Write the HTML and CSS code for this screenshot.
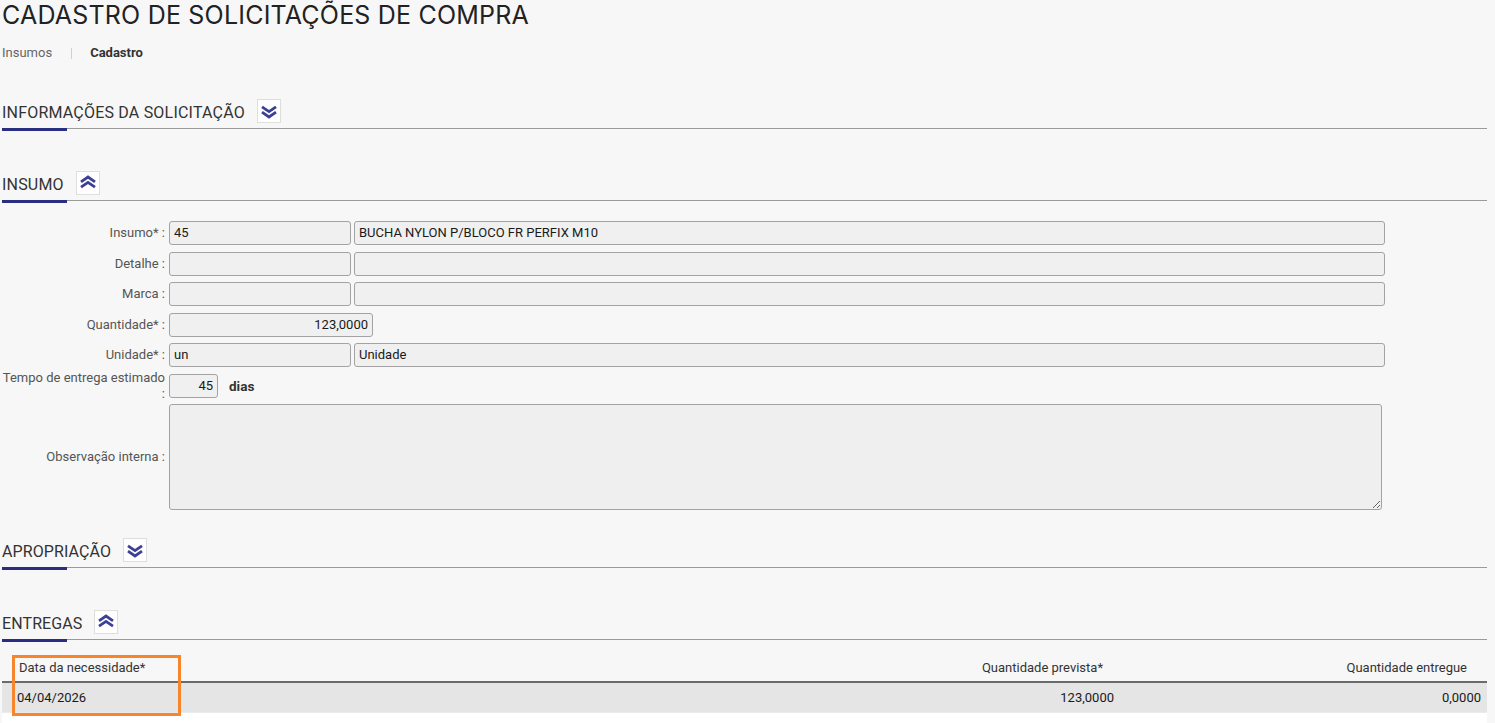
FILE: index.html
```html
<!DOCTYPE html>
<html lang="pt-BR">
<head>
<meta charset="utf-8">
<title>Cadastro de Solicitações de Compra</title>
<link rel="stylesheet" href="styles.css">
</head>
<body>
<div class="page">
  <h1 class="title">CADASTRO DE SOLICITAÇÕES DE COMPRA</h1>
  <nav class="crumbs">
    <span class="crumb">Insumos</span>
    <span class="crumb-sep"></span>
    <span class="crumb current">Cadastro</span>
  </nav>

  <section class="sec sec-info">
    <div class="sec-head">
      <h2 class="sec-title">INFORMAÇÕES DA SOLICITAÇÃO</h2>
      <button class="toggle" type="button" aria-label="Expandir">
        <svg width="24" height="24" viewBox="0 0 24 24"><path d="M5 7.8 L12 12.6 L19 7.8 M5 13.2 L12 18 L19 13.2" fill="none" stroke="#3d4196" stroke-width="2.8"/></svg>
      </button>
    </div>
  </section>

  <section class="sec sec-insumo">
    <div class="sec-head">
      <h2 class="sec-title">INSUMO</h2>
      <button class="toggle" type="button" aria-label="Recolher">
        <svg width="24" height="24" viewBox="0 0 24 24"><path d="M5 16.2 L12 11.4 L19 16.2 M5 10.8 L12 6 L19 10.8" fill="none" stroke="#3d4196" stroke-width="2.8"/></svg>
      </button>
    </div>
    <div class="form">
      <div class="row">
        <label class="lbl">Insumo* :</label>
        <div class="fields"><div class="inp w-code">45</div><div class="inp w-desc">BUCHA NYLON P/BLOCO FR PERFIX M10</div></div>
      </div>
      <div class="row">
        <label class="lbl">Detalhe :</label>
        <div class="fields"><div class="inp w-code"></div><div class="inp w-desc"></div></div>
      </div>
      <div class="row">
        <label class="lbl">Marca :</label>
        <div class="fields"><div class="inp w-code"></div><div class="inp w-desc"></div></div>
      </div>
      <div class="row">
        <label class="lbl">Quantidade* :</label>
        <div class="fields"><div class="inp w-qty num">123,0000</div></div>
      </div>
      <div class="row">
        <label class="lbl">Unidade* :</label>
        <div class="fields"><div class="inp w-code">un</div><div class="inp w-desc">Unidade</div></div>
      </div>
      <div class="row">
        <label class="lbl lbl-two">Tempo de entrega estimado<br>:</label>
        <div class="fields"><div class="inp w-days num">45</div><span class="unit">dias</span></div>
      </div>
      <div class="row">
        <label class="lbl">Observação interna :</label>
        <div class="fields"><textarea class="area" readonly></textarea></div>
      </div>
    </div>
  </section>

  <section class="sec sec-aprop">
    <div class="sec-head">
      <h2 class="sec-title">APROPRIAÇÃO</h2>
      <button class="toggle" type="button" aria-label="Expandir">
        <svg width="24" height="24" viewBox="0 0 24 24"><path d="M5 7.8 L12 12.6 L19 7.8 M5 13.2 L12 18 L19 13.2" fill="none" stroke="#3d4196" stroke-width="2.8"/></svg>
      </button>
    </div>
  </section>

  <section class="sec sec-entregas">
    <div class="sec-head">
      <h2 class="sec-title">ENTREGAS</h2>
      <button class="toggle" type="button" aria-label="Recolher">
        <svg width="24" height="24" viewBox="0 0 24 24"><path d="M5 16.2 L12 11.4 L19 16.2 M5 10.8 L12 6 L19 10.8" fill="none" stroke="#3d4196" stroke-width="2.8"/></svg>
      </button>
    </div>
    <div class="table-wrap">
      <table class="grid">
        <colgroup><col class="c1"><col class="c2"><col class="c3"></colgroup>
        <thead>
          <tr>
            <th class="h-date">Data da necessidade*</th>
            <th class="h-prev">Quantidade prevista*</th>
            <th class="h-ent">Quantidade entregue</th>
          </tr>
        </thead>
        <tbody>
          <tr>
            <td class="d-date">04/04/2026</td>
            <td class="d-num">123,0000</td>
            <td class="d-num">0,0000</td>
          </tr>
        </tbody>
      </table>
      <div class="filler"></div>
      <div class="highlight"></div>
    </div>
  </section>
</div>
</body>
</html>
```

FILE: styles.css
```css
* { box-sizing: border-box; }

html, body {
  margin: 0;
  padding: 0;
  background: #f7f7f7;
}

body {
  font-family: Roboto, "Liberation Sans", Arial, sans-serif;
  font-size: 13px;
  color: #333;
  overflow: hidden;
}

.page {
  padding: 0 8px 0 2px;
}

.title {
  margin: 0;
  font-family: Inter, "Liberation Sans", sans-serif;
  font-weight: 400;
  font-size: 25px;
  line-height: 30px;
  color: #222;
  letter-spacing: 0.2px;
}

.crumbs {
  display: flex;
  align-items: center;
  margin-top: 15px;
  height: 16px;
  line-height: 16px;
}

.crumb {
  color: #666;
  font-size: 13px;
}

.crumb-sep {
  width: 1px;
  height: 11px;
  background: #d0d0d0;
  margin: 0 18px 0 19px;
}

.crumb.current {
  color: #333;
  font-weight: 700;
}

/* sections */
.sec-head {
  position: relative;
  display: flex;
  align-items: center;
  gap: 12px;
  padding-bottom: 5px;
  border-bottom: 1px solid #9a9a9a;
}

.sec-head::after {
  content: "";
  position: absolute;
  left: 0;
  bottom: -3px;
  width: 65px;
  height: 3px;
  background: #2a2e80;
}

.sec-title {
  margin: 0;
  padding-top: 4px;
  font-size: 16px;
  font-weight: 400;
  line-height: 20px;
  color: #333;
  letter-spacing: 0.2px;
}

.sec-aprop .sec-title,
.sec-entregas .sec-title { letter-spacing: 0.1px; }

.toggle {
  width: 24px;
  height: 24px;
  padding: 0;
  margin: 0;
  border: 1px solid #dedede;
  background: #fff;
  display: flex;
  align-items: center;
  justify-content: center;
}

.toggle svg { display: block; flex: none; }

.sec-info { margin-top: 38px; }
.sec-insumo { margin-top: 42px; }
.sec-aprop { margin-top: 28px; }
.sec-entregas { margin-top: 42px; }

/* form */
.form {
  margin-top: 20px;
  display: flex;
  flex-direction: column;
  gap: 6.5px;
}

.row {
  display: flex;
  align-items: center;
}

.lbl {
  width: 163px;
  flex: none;
  text-align: right;
  color: #555;
  font-size: 13px;
  line-height: 16px;
  margin-right: 4px;
  white-space: nowrap;
}

.lbl-two {
  margin-top: -4px;
  margin-bottom: -4px;
}

.fields {
  display: flex;
  align-items: center;
  gap: 3px;
}

.inp {
  height: 24px;
  line-height: 22px;
  background: #f0f0f0;
  border: 1px solid #a3a3a3;
  border-radius: 3px;
  padding: 0 4px;
  font-size: 13px;
  color: #1a1a1a;
  white-space: nowrap;
  overflow: hidden;
}

.num { text-align: right; }

.w-code { width: 182px; }
.w-desc { width: 1031px; }
.w-qty { width: 204px; }
.w-days { width: 49px; }

.unit {
  margin-left: 8px;
  font-weight: 700;
  color: #333;
  font-size: 13.5px;
}

.area {
  display: block;
  width: 1213px;
  height: 106px;
  background: #efefef;
  border: 1px solid #a3a3a3;
  border-radius: 3px;
  font-family: inherit;
  font-size: 13px;
  margin: 0;
  resize: both;
}

/* table */
.table-wrap {
  position: relative;
  margin-top: 17px;
}

.grid {
  width: 100%;
  border-collapse: collapse;
  table-layout: fixed;
}

.c2 { width: 370px; }
.c3 { width: 367px; }

.grid th {
  font-weight: 400;
  color: #333;
  font-size: 13px;
  line-height: 16px;
  padding: 3px 10px 5px;
  border-bottom: 2px solid #6b6b6b;
}

.h-date { text-align: left; padding-left: 17px !important; }
.h-prev { text-align: right; padding-right: 17px !important; }
.h-ent { text-align: right; padding-right: 20px !important; }

.grid td {
  background: #e5e5e5;
  height: 30px;
  padding: 0 6px 0 15px;
  font-size: 13px;
  color: #1a1a1a;
  line-height: 16px;
}

.grid td.d-num { text-align: right; }

.filler {
  height: 30px;
  background: #fff;
  border-top: 1px solid #ebebeb;
}

.highlight {
  position: absolute;
  left: 10px;
  top: -2px;
  width: 169px;
  height: 61px;
  border: 3px solid #f7852b;
  pointer-events: none;
}
```
